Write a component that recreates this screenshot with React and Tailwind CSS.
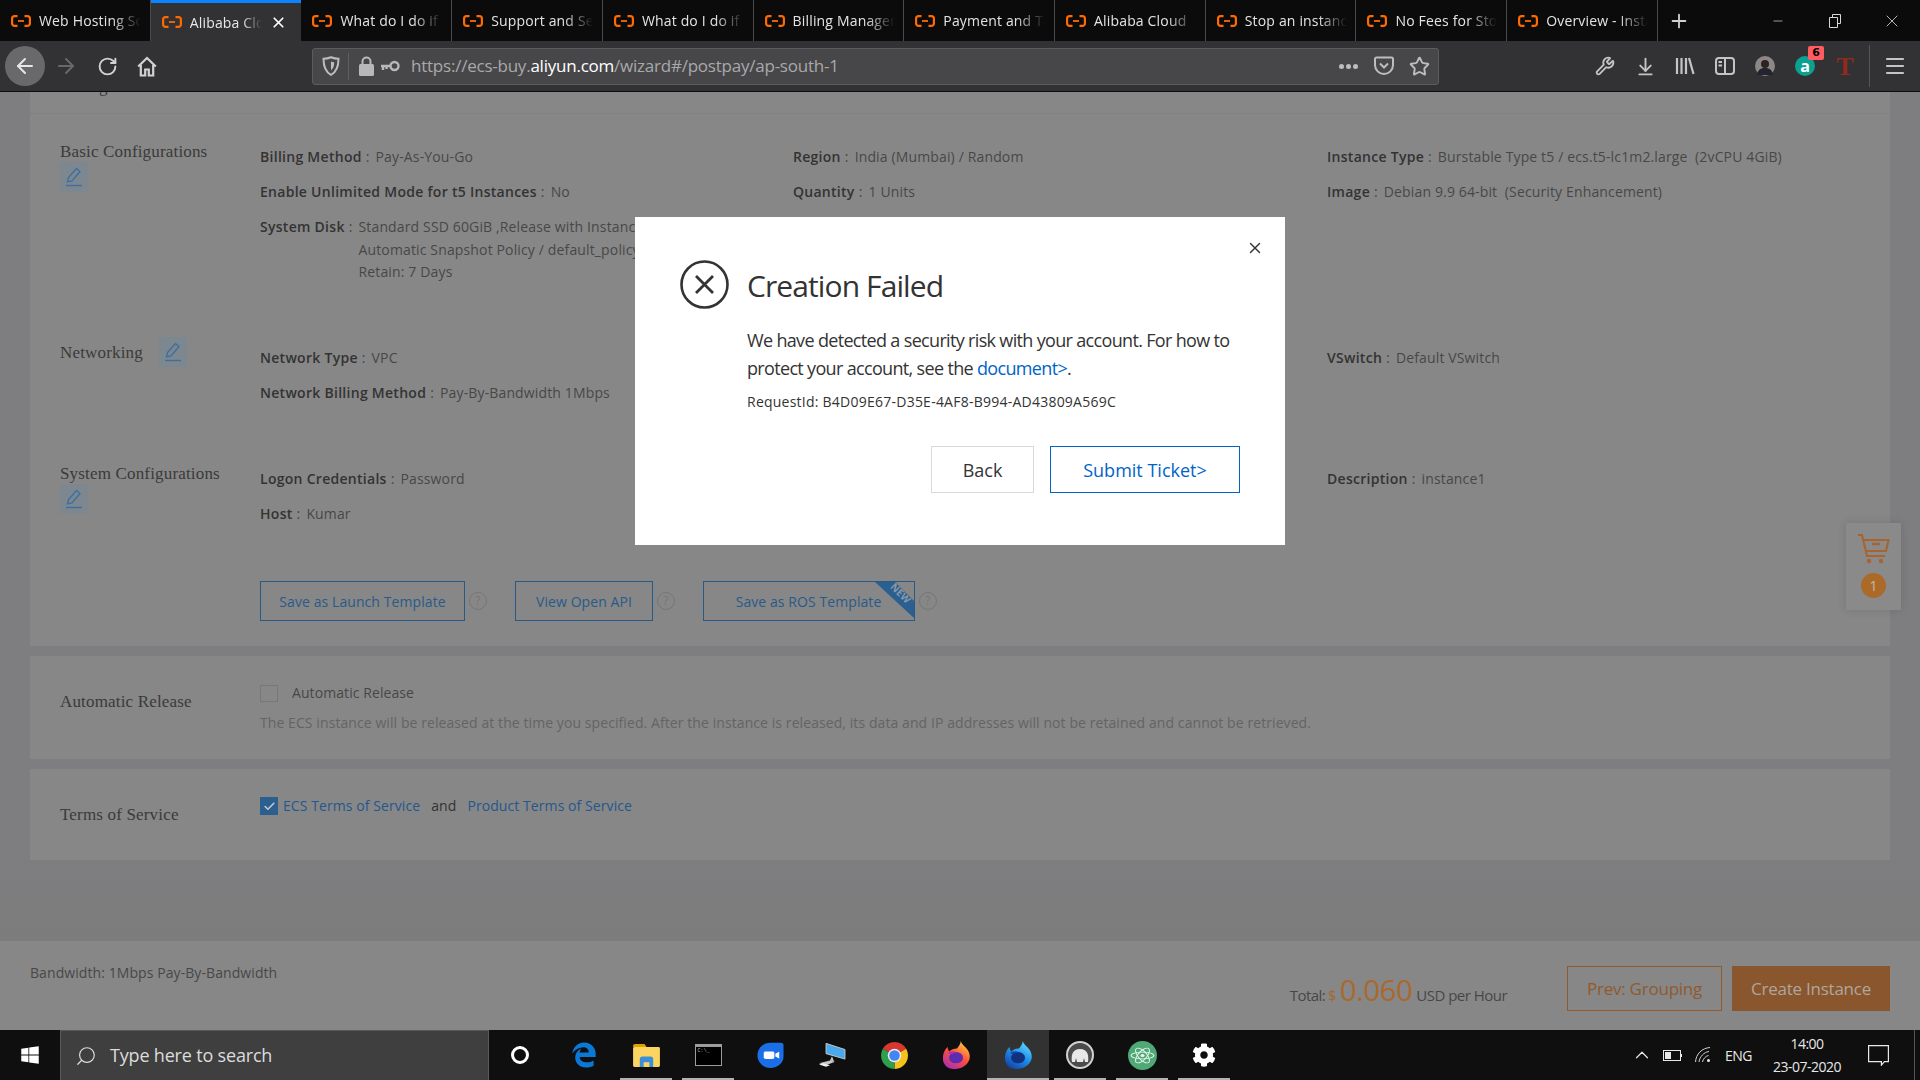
import React from "react";
import { ArrowLeft, ArrowRight, RotateCw, Star, Wrench, ArrowDownToLine, Menu, X, Search, ChevronUp, Check, Minus, Plus } from "lucide-react";
import { FaWindows, FaEdgeLegacy, FaCog } from "react-icons/fa";

const tabs = ["Web Hosting Solutions", "Alibaba Cloud", "What do I do if", "Support and Service", "What do I do if", "Billing Management", "Payment and Tax", "Alibaba Cloud", "Stop an instance", "No Fees for Stopped", "Overview - Instance"];

const AliLogo = () => (
  <svg width="20" height="12" viewBox="0 0 20 12" fill="none" stroke="#ff6a00" strokeWidth="2.2" className="shrink-0">
    <path d="M6.5 1.1H3.6A2.5 2.5 0 0 0 1.1 3.6v4.8a2.5 2.5 0 0 0 2.5 2.5h2.9" />
    <path d="M13.5 1.1h2.9a2.5 2.5 0 0 1 2.5 2.5v4.8a2.5 2.5 0 0 1-2.5 2.5h-2.9" />
    <path d="M7 6h6" strokeWidth="1.8" />
  </svg>
);

const Tab = ({ title, active }) => (
  <div className={`flex w-[150.73px] shrink-0 items-center pl-[11px] gap-[8px] text-[14px] tracking-[0.012em] ${active ? "bg-[#323234] border-t-[3px] border-[#0a84ff] text-[#e8e8e8]" : "border-r border-[#4a4a4c] text-[#e4e4e4]"}`}>
    <AliLogo />
    <span className={`overflow-hidden whitespace-nowrap [mask-image:linear-gradient(to_right,black_72%,transparent)] ${active ? "w-[72px]" : "w-[102px]"}`}>{title}</span>
    {active && <X size={17} strokeWidth={2.4} className="text-white" />}
  </div>
);

const Btn = ({ children, className = "" }) => (
  <div className={`flex h-[40px] w-[40px] shrink-0 items-center justify-center ${className}`}>{children}</div>
);

const TabBar = () => (
  <div className="flex h-[41px] shrink-0 bg-[#0b0b0c]">
    {tabs.map((t, i) => <Tab key={i} title={t} active={i === 1} />)}
    <div className="flex w-[42px] items-center justify-center text-[#d0d0d0]"><Plus size={22} strokeWidth={2} /></div>
    <div className="ml-[50px] flex w-[56px] items-center justify-center text-[#d8d8d8]"><Minus size={14} strokeWidth={1.2} /></div>
    <div className="flex w-[58px] items-center justify-center">
      <svg width="12" height="14" viewBox="0 0 12 14" fill="none" stroke="#d8d8d8"><path d="M.5 3.5h8v10h-8z" /><path d="M3.5 3.5v-3h8v9h-3" /></svg>
    </div>
    <div className="flex w-[56px] items-center justify-center text-[#d8d8d8]"><X size={20} strokeWidth={1} /></div>
  </div>
);

const Shield = () => (
  <svg width="18" height="20" viewBox="0 0 18 20" fill="none" stroke="#bdbdbf" strokeWidth="2">
    <path d="M9 1.2c2.5 1 5 1.5 7.5 1.5 0 7.5-1.5 13-7.5 16.1C3 15.700 1.500 10.200 1.500 2.700 4 2.700 6.500 2.200 9 1.200z" />
    <path d="M9 5.500c1 .4 2 .6 3.200.7 0 3.700-.8 6.300-3.200 8z" fill="#bdbdbf" stroke="none" />
  </svg>
);
const LockIcon = () => (
  <svg width="15" height="20" viewBox="0 0 15 20"><path d="M3.500 8V5.500a4 4 0 0 1 8 0V8" fill="none" stroke="#b8b8ba" strokeWidth="2" /><rect y="8" width="15" height="12" rx="1.500" fill="#b8b8ba" /></svg>
);
const KeyIcon = () => (
  <svg width="20" height="12" viewBox="0 0 20 12" fill="none" stroke="#b8b8ba" strokeWidth="2.400"><circle cx="14.500" cy="6" r="4" /><path d="M10 6H1M3 6v4M6.500 6v3" /></svg>
);
const Pocket = () => (
  <svg width="20" height="20" viewBox="0 0 20 20" fill="none" stroke="#bdbdbf" strokeWidth="2"><path d="M2.500 1.500h15a1.500 1.500 0 0 1 1.500 1.500v6a9 9 0 0 1-18 0V3a1.500 1.500 0 0 1 1.500-1.500z" /><path d="M6 7.500l4 4 4-4" /></svg>
);
const LibraryIcon = () => (
  <svg width="20" height="20" viewBox="0 0 20 20" fill="none" stroke="#c4c4c6" strokeWidth="2.200"><path d="M2 2v16M6.500 2v16M11 2v16M14 2l4.500 16" /></svg>
);
const SidebarIcon = () => (
  <svg width="20" height="20" viewBox="0 0 20 20" fill="none" stroke="#c4c4c6" strokeWidth="2"><rect x="1" y="2" width="18" height="16" rx="3" /><path d="M10 2v16M3.500 6H7M3.500 9.500H7" /></svg>
);
const HomeIcon = () => (
  <svg width="20" height="21" viewBox="0 0 20 21" fill="none" stroke="#d2d2d4" strokeWidth="2.200"><path d="M1.200 10.500 10 2l8.800 8.500" /><path d="M3.800 9v10.500h4.400v-6h3.600v6h4.400V9" /></svg>
);

const Toolbar = () => (
  <div className="flex h-[51px] shrink-0 items-center border-b border-[#0c0c0d] bg-[#323234] pl-[5px]">
    <Btn className="rounded-full bg-[#69696b]"><ArrowLeft size={24} strokeWidth={2} className="text-[#e6e6e6]" /></Btn>
    <Btn className="ml-[1px]"><ArrowRight size={24} strokeWidth={2} className="text-[#68686a]" /></Btn>
    <Btn className="ml-[1px]"><RotateCw size={21} strokeWidth={2.200} className="text-[#d2d2d4]" /></Btn>
    <Btn><HomeIcon /></Btn>
    <div className="ml-[145px] flex h-[37px] w-[1127px] shrink-0 items-center rounded-[3px] border border-[#5c5c5e] bg-[#474749]">
      <div className="flex h-[27px] w-[36px] items-center justify-center border-r border-[#5f5f61]"><Shield /></div>
      <div className="ml-[10px] flex items-center gap-[6px]"><LockIcon /><KeyIcon /></div>
      <div className="ml-[11px] text-[17px] tracking-[-0.0135em] text-[#a9a9ab]">https://ecs-buy.<span className="text-white">aliyun.com</span>/wizard#/postpay/ap-south-1</div>
      <div className="ml-auto flex items-center">
        <div className="flex w-[36px] justify-center gap-[2px]">
          <span className="h-[5px] w-[5px] rounded-full bg-[#bdbdbf]" /><span className="h-[5px] w-[5px] rounded-full bg-[#bdbdbf]" /><span className="h-[5px] w-[5px] rounded-full bg-[#bdbdbf]" />
        </div>
        <div className="flex w-[36px] justify-center"><Pocket /></div>
        <div className="flex w-[36px] justify-center pr-[2px] text-[#bdbdbf]"><Star size={21} strokeWidth={2.200} /></div>
      </div>
    </div>
    <div className="ml-[146px] flex items-center text-[#c4c4c6]">
      <Btn><Wrench size={20} strokeWidth={2.200} /></Btn>
      <Btn><ArrowDownToLine size={21} strokeWidth={2.200} /></Btn>
      <Btn><LibraryIcon /></Btn>
      <Btn><SidebarIcon /></Btn>
      <Btn>
        <svg width="20" height="20" viewBox="0 0 20 20"><circle cx="10" cy="10" r="10" fill="#8d8886" /><circle cx="10" cy="8" r="4" fill="#2c2320" /><path d="M2 19c1-6 4-7 8-7s7 1 8 7z" fill="#22242e" /></svg>
      </Btn>
      <Btn className="relative">
        <span className="flex h-[20px] w-[20px] items-center justify-center rounded-full bg-[#0aa190] text-[16px] font-bold leading-none text-white">a</span>
        <span className="absolute right-[1px] top-[0px] flex h-[14px] w-[16px] items-center justify-center rounded-[2px] bg-[#ff5c62] font-['DejaVu_Sans',sans-serif] text-[11px] font-bold text-black">6</span>
      </Btn>
      <Btn><span className="font-['Liberation_Serif',serif] text-[26px] font-bold text-[#8e2b1c]">T</span></Btn>
    </div>
    <div className="ml-[4px] h-[42px] w-px bg-[#555557]" />
    <Btn className="ml-[5px]"><Menu size={24} strokeWidth={2.200} className="text-[#c4c4c6]" /></Btn>
  </div>
);

const EditBtn = ({ className = "" }) => (
  <div className={`flex h-[30px] w-[28px] items-center justify-center rounded-[2px] bg-[#7c8790] ${className}`}>
    <svg width="18" height="20" viewBox="0 0 18 20" fill="none" stroke="#3c6f9f" strokeWidth="1.300"><path d="M11.500 1.500l3.500 3-8 9.500-4.500 1 1-4.500z" /><path d="M1 18.500h16" /></svg>
  </div>
);

const Heading = ({ children }) => (
  <div className="whitespace-nowrap font-['Liberation_Serif',serif] text-[17px] leading-[22px] tracking-[0.01em] text-[#3a3a3a]">{children}</div>
);

const Field = ({ label, children }) => (
  <div className="flex text-[14px] leading-[22.500px] tracking-[0.01em] text-[#474747]">
    <span className="whitespace-nowrap font-semibold tracking-[0.02em] text-[#333333]">{label}</span>
    <span className="ml-[4px] mr-[6px]">:</span>
    <div className="whitespace-nowrap">{children}</div>
  </div>
);

const Col = ({ children }) => <div className="flex flex-col gap-[12.500px]">{children}</div>;
const Grid3 = ({ children }) => <div className="grid grid-cols-[533px_534px_1fr]">{children}</div>;

const OutlineBtn = ({ children, className = "" }) => (
  <div className={`relative flex h-[40px] items-center justify-center border border-[#285a86] pt-[1px] text-[14px] text-[#2a5a88] ${className}`}>{children}</div>
);
const Help = () => (
  <span className="ml-[4px] flex h-[18px] w-[18px] items-center justify-center rounded-full border border-[#767676] text-[12px] text-[#767676]">?</span>
);

const ConfigPanel = () => (
  <div className="flex h-[554px] flex-col bg-[#878787]">
    <div className="h-[22px] overflow-hidden border-b border-dotted border-[#7c7c7c] pl-[30px]">
      <div className="-mt-[16px] font-['Liberation_Serif',serif] text-[17px] leading-[22px] text-[#3a3a3a]">Configurations</div>
    </div>
    <div className="flex h-[216px]">
      <div className="w-[230px] pl-[30px] pt-[27px]"><Heading>Basic Configurations</Heading><EditBtn className="-mt-[1px]" /></div>
      <div className="flex-1 pt-[32px]">
        <Grid3>
          <Col>
            <Field label="Billing Method">Pay-As-You-Go</Field>
            <Field label="Enable Unlimited Mode for t5 Instances">No</Field>
            <Field label="System Disk">Standard SSD 60GiB ,Release with Instance<br />Automatic Snapshot Policy / default_policy<br />Retain: 7 Days</Field>
          </Col>
          <Col>
            <Field label="Region">India (Mumbai) / Random</Field>
            <Field label="Quantity">1 Units</Field>
          </Col>
          <Col>
            <Field label="Instance Type">Burstable Type t5 / ecs.t5-lc1m2.large&nbsp;&nbsp;(2vCPU 4GiB)</Field>
            <Field label="Image">Debian 9.9 64-bit&nbsp;&nbsp;(Security Enhancement)</Field>
          </Col>
        </Grid3>
      </div>
    </div>
    <div className="flex h-[132px]">
      <div className="flex w-[230px] items-start gap-[16px] pl-[30px] pt-[12px]"><Heading>Networking</Heading><EditBtn className="-mt-[5px]" /></div>
      <div className="flex-1 pt-[17px]">
        <Grid3>
          <Col>
            <Field label="Network Type">VPC</Field>
            <Field label="Network Billing Method">Pay-By-Bandwidth 1Mbps</Field>
          </Col>
          <div />
          <Col><Field label="VSwitch">Default VSwitch</Field></Col>
        </Grid3>
      </div>
    </div>
    <div className="flex flex-1">
      <div className="w-[230px] pl-[30px] pt-[1px]"><Heading>System Configurations</Heading><EditBtn className="-mt-[1px]" /></div>
      <div className="flex-1 pt-[6px]">
        <Grid3>
          <Col>
            <Field label="Logon Credentials">Password</Field>
            <Field label="Host">Kumar</Field>
          </Col>
          <div />
          <Col><Field label="Description">instance1</Field></Col>
        </Grid3>
        <div className="mt-[55px] flex items-center">
          <OutlineBtn className="w-[205px]">Save as Launch Template</OutlineBtn><Help />
          <OutlineBtn className="ml-[28px] w-[138px]">View Open API</OutlineBtn><Help />
          <OutlineBtn className="ml-[28px] w-[212px] overflow-hidden">
            <span className="pl-[3px] pr-[4px]">Save as ROS Template</span>
            <svg className="absolute right-0 top-0" width="40" height="36" viewBox="0 0 40 36"><path d="M1 0h20l19 19v17z" fill="#2a5f8f" /></svg>
            <span className="absolute right-[1px] top-[6px] rotate-45 text-[10px] font-bold leading-none text-[#8a9aa8]">NEW</span>
          </OutlineBtn>
          <Help />
        </div>
      </div>
    </div>
  </div>
);

const ReleasePanel = () => (
  <div className="mt-[10px] flex h-[103px] bg-[#878787]">
    <div className="w-[230px] pl-[30px] pt-[35px]"><Heading>Automatic Release</Heading></div>
    <div className="flex-1 pt-[26px] text-[14px] leading-[22px]">
      <div className="flex items-center text-[#474747]">
        <span className="h-[17px] w-[18px] border border-[#777777]" />
        <span className="ml-[14px]">Automatic Release</span>
      </div>
      <div className="mt-[8px] whitespace-nowrap text-[#646464]">The ECS instance will be released at the time you specified. After the instance is released, its data and IP addresses will not be retained and cannot be retrieved.</div>
    </div>
  </div>
);

const TermsPanel = () => (
  <div className="mt-[10px] flex h-[91px] bg-[#878787]">
    <div className="w-[230px] pl-[30px] pt-[35px]"><Heading>Terms of Service</Heading></div>
    <div className="flex flex-1 items-start pt-[26px] text-[14px] leading-[22px]">
      <span className="mr-[5px] mt-[2px] flex h-[18px] w-[18px] items-center justify-center bg-[#2a5f8f] text-[#c8c8c8]"><Check size={13} strokeWidth={3} /></span>
      <span className="text-[#24588c]">ECS Terms of Service</span>
      <span className="mx-[11px] text-[#333333]">and</span>
      <span className="text-[#24588c]">Product Terms of Service</span>
    </div>
  </div>
);

const Footer = () => (
  <div className="mt-auto flex h-[89px] shrink-0 items-start justify-between bg-[#878787] px-[30px]">
    <div className="pt-[21px] text-[14px] leading-[22px] text-[#474747]">Bandwidth: 1Mbps Pay-By-Bandwidth</div>
    <div className="flex items-start pt-[25px]">
      <div className="mt-[2px] flex h-[50px] items-baseline text-[15px] tracking-[-0.035em] text-[#474747]">
        <span>Total:</span>
        <span className="ml-[3px] text-[14px] text-[#a3692f]">$</span>
        <span className="ml-[4px] text-[29.500px] leading-[44px] text-[#a8692f]">0.060</span>
        <span className="ml-[4px]">USD per Hour</span>
      </div>
      <div className="ml-[60px] flex h-[45px] w-[155px] items-center justify-center border border-[#8f5a30] text-[17px] tracking-[-0.014em] text-[#8f5a30]">Prev: Grouping</div>
      <div className="ml-[10px] flex h-[45px] w-[158px] items-center justify-center bg-[#8a562e] text-[17px] tracking-[-0.014em] text-[#aea69d]">Create Instance</div>
    </div>
  </div>
);

const Fox = ({ a, b, c, inner }) => (
  <svg width="27" height="28" viewBox="0 0 29 37" preserveAspectRatio="none">
    <defs>
      <linearGradient id={`g${a.slice(1)}`} x1="0.800" y1="0" x2="0.200" y2="1">
        <stop offset="0" stopColor={b} /><stop offset="0.500" stopColor={a} /><stop offset="1" stopColor={c} />
      </linearGradient>
    </defs>
    <path d="M19 0c1 5 6 8 8 13 3 7 2 13-2 18-5 6-14 8-20 4C0 31-1 24 .500 17 1.500 13 3 10 5 8c0 3 1 5 2 6 2-3 5-4 8-4 2-3 4-6 4-10z" fill={`url(#g${a.slice(1)})`} />
    <circle cx="14" cy="22" r="7.500" fill={inner} />
    <path d="M5 16c3-3 9-3 12 0-4-1-6 0-7 2z" fill={c} />
  </svg>
);

const Chrome = () => (
  <svg width="27" height="27" viewBox="2 2 28 28">
    <path d="M16 16 3.880 9A14 14 0 0 1 28.120 9z" fill="#d8382f" />
    <path d="M16 16 28.120 9A14 14 0 0 1 16 30z" fill="#f6c21a" />
    <path d="M16 16 16 30A14 14 0 0 1 3.880 9z" fill="#2f9e4f" />
    <circle cx="16" cy="16" r="7" fill="#eeeeee" /><circle cx="16" cy="16" r="5.500" fill="#4285f4" />
  </svg>
);

const Folder = () => (
  <svg width="27" height="23" viewBox="0 0 28 24">
    <path d="M0 2a2 2 0 0 1 2-2h10l2 3H0z" fill="#e0a100" /><rect y="3" width="28" height="21" rx="1.500" fill="#fcd462" />
    <path d="M7 24v-8a3 3 0 0 1 3-3h8a3 3 0 0 1 3 3v8h-4v-5h-6v5z" fill="#3a8fd8" />
  </svg>
);
const Terminal = () => (
  <div className="h-[22px] w-[27px] border border-[#9c9c9c] border-t-[3px] bg-black pl-[2px] pt-[2px] font-['Liberation_Mono',monospace] text-[5px] leading-none text-[#bbbbbb]">C:\_</div>
);
const ZoomIcon = () => (
  <svg width="27" height="27" viewBox="0 0 28 40" preserveAspectRatio="none">
    <path d="M14 1h10a3.500 3.500 0 0 1 3.500 3.500V22c0 9-6 16.500-13.500 16.500S.500 30 .500 20 6 1 14 1z" fill="#1b6fe6" />
    <rect x="7" y="14" width="11" height="11" rx="2" fill="#fff" /><path d="M19 17.500l4-3v10l-4-3z" fill="#fff" />
  </svg>
);
const Pc = () => (
  <svg width="28" height="26" viewBox="0 0 28 38" preserveAspectRatio="none">
    <path d="M8 2 27 11v14L8 17z" fill="#4aa8ec" stroke="#d0d0d0" />
    <path d="M14 21l2 7-4-1zM1 31l11-4 5 2-9 5z" fill="#c8c8c8" /><path d="M1 33l7 3 4-2-7-3z" fill="#eeeeee" />
  </svg>
);
const Mamp = () => (
  <svg width="28" height="28" viewBox="0 0 28 28">
    <circle cx="14" cy="14" r="13" fill="#4b4b4b" stroke="#d2d2d2" strokeWidth="2" />
    <path d="M6 21c-1-6 0-13 8-13s9 7 8 13h-3l-1-4-1 4h-6l-1-4-1 4z" fill="#e8e8e8" />
  </svg>
);
const Atom = () => (
  <svg width="29" height="29" viewBox="0 0 28 38" preserveAspectRatio="none">
    <ellipse cx="14" cy="19" rx="14" ry="19" fill="#4fa876" />
    <g fill="none" stroke="#e8f5ec" strokeWidth="1">
      <ellipse cx="14" cy="19" rx="11" ry="4.500" /><ellipse cx="14" cy="19" rx="11" ry="4.500" transform="rotate(60 14 19)" /><ellipse cx="14" cy="19" rx="11" ry="4.500" transform="rotate(120 14 19)" />
    </g>
    <circle cx="14" cy="19" r="2" fill="#e8f5ec" />
  </svg>
);

const TaskIcon = ({ children, on, active }) => (
  <div className={`relative flex h-[50px] w-[62px] shrink-0 items-center justify-center ${active ? "bg-[#323232]" : ""}`}>
    {children}
    {on && <span className={`absolute bottom-0 h-[2px] bg-[#b2b2b2] ${active ? "inset-x-0" : "inset-x-[5px]"}`} />}
  </div>
);

const Taskbar = () => (
  <div className="flex h-[50px] shrink-0 bg-[#0f0f0f] text-white">
    <div className="flex w-[60px] items-center justify-center"><FaWindows size={20} /></div>
    <div className="flex h-[50px] w-[429px] items-center border-x border-t border-[#5a5a5a] bg-[#3f3f3f] pl-[14px] text-[18px] tracking-[-0.01em] text-[#dcdcdc]">
      <Search size={22} strokeWidth={1.300} className="-scale-x-100" />
      <span className="ml-[13px]">Type here to search</span>
    </div>
    <TaskIcon><span className="h-[18px] w-[18px] rounded-full border-[3px] border-white" /></TaskIcon>
    <div className="w-[2px] shrink-0" />
    <TaskIcon><FaEdgeLegacy size={26} className="text-[#0a78d7]" /></TaskIcon>
    <TaskIcon on><Folder /></TaskIcon>
    <TaskIcon on><Terminal /></TaskIcon>
    <TaskIcon><ZoomIcon /></TaskIcon>
    <TaskIcon><Pc /></TaskIcon>
    <TaskIcon><Chrome /></TaskIcon>
    <TaskIcon><Fox a="#ff4f3a" b="#ffd23f" c="#a72bb8" inner="#5b2bb0" /></TaskIcon>
    <TaskIcon on active><Fox a="#1f8fe8" b="#63e0ff" c="#123fa8" inner="#12307c" /></TaskIcon>
    <TaskIcon on><Mamp /></TaskIcon>
    <TaskIcon on><Atom /></TaskIcon>
    <TaskIcon on><FaCog size={24} /></TaskIcon>
    <div className="ml-auto flex items-center pr-[5px] text-[14px] tracking-[-0.035em] text-[#e8e8e8]">
      <ChevronUp size={22} strokeWidth={1.300} className="-mr-[2px]" />
      <svg className="ml-[12px]" width="19" height="11" viewBox="0 0 19 11" fill="none" stroke="#e8e8e8"><rect x=".5" y=".5" width="17" height="10" /><rect x="2" y="2" width="6" height="7" fill="#e8e8e8" stroke="none" /><path d="M18.500 4v3" /></svg>
      <svg className="ml-[13px]" width="16" height="16" viewBox="0 0 16 16" fill="none" stroke="#cfcfcf"><path d="M.5 15C1 7 7 1 15 .5M4 15c.5-5 5-10 10-10.500M7.500 15c.5-3 3-6 6-6.500" /><circle cx="13.500" cy="13.500" r="1.500" fill="#e8e8e8" stroke="none" /></svg>
      <span className="ml-[14px] w-[38px]">ENG</span>
      <div className="ml-[2px] w-[84px] text-center leading-[23px]"><div>14:00</div><div>23-07-2020</div></div>
      <svg className="ml-[19px]" width="21" height="21" viewBox="0 0 21 21" fill="none" stroke="#e8e8e8" strokeWidth="1.200"><path d="M.6.6h19.800v16h-4l-3 3.500v-3.500H.6z" /></svg>
      <div className="ml-[25px] h-[50px] w-px bg-[#555555]" />
    </div>
  </div>
);

const CartFloat = () => (
  <div className="absolute left-[1846px] top-[523px] flex h-[87px] w-[55px] flex-col items-center rounded-[1px] bg-[#8a8a8a] pt-[11px] shadow-[0_0_10px_rgba(0,0,0,0.12)]">
    <svg width="32" height="30" viewBox="0 0 32 30" fill="none" stroke="#a8642e" strokeWidth="2">
      <path d="M0 1h4l5 21h18" /><path d="M5.500 6h25l-2.500 11H8" /><path d="M14 10h8" strokeWidth="2.500" />
      <circle cx="11" cy="27" r="2.200" fill="#a8642e" stroke="none" /><circle cx="23" cy="27" r="2.200" fill="#a8642e" stroke="none" />
    </svg>
    <span className="mt-[9px] flex h-[25px] w-[25px] items-center justify-center rounded-full bg-[#ab6a28] text-[14px] text-[#c8b8a8]">1</span>
  </div>
);

const Dialog = () => (
  <div className="absolute left-[635px] top-[217px] h-[328px] w-[650px] bg-white text-[#333333]">
    <X size={18} strokeWidth={1.800} className="absolute right-[21px] top-[22px] text-[#333333]" />
    <div className="flex items-center pl-[45px] pt-[43px]">
      <svg width="49" height="49" viewBox="0 0 49 49" fill="none" stroke="#333333" strokeWidth="2.600" className="shrink-0">
        <circle cx="24.500" cy="24.500" r="23" /><path d="M16 16l17 17M33 16 16 33" strokeWidth="2.800" />
      </svg>
      <div className="ml-[18px] mt-[3px] text-[30px] leading-[40px] tracking-[-0.03em]">Creation Failed</div>
    </div>
    <div className="mt-[17px] pl-[112px] text-[18px] leading-[28px] tracking-[-0.037em]">
      We have detected a security risk with your account. For how to<br />
      protect your account, see the <span className="text-[#0064c8]">document&gt;</span>.
    </div>
    <div className="mt-[10px] pl-[112px] text-[14px] leading-[20px] tracking-[0.017em]">RequestId: B4D09E67-D35E-4AF8-B994-AD43809A569C</div>
    <div className="mt-[34px] flex justify-end gap-[16px] pr-[45px] tracking-[0em]">
      <div className="flex h-[47px] w-[103px] items-center justify-center border border-[#d9d9d9] pt-[2px] text-[18px]">Back</div>
      <div className="flex h-[47px] w-[190px] items-center justify-center border border-[#0064c8] pt-[2px] text-[18px] text-[#0064c8]">Submit Ticket&gt;</div>
    </div>
  </div>
);

export default function App() {
  return (
    <div className="relative flex h-[1080px] w-[1920px] flex-col overflow-hidden bg-[#7e7e80] font-['Open_Sans',sans-serif] tracking-[0.005em]">
      <TabBar />
      <Toolbar />
      <div className="flex flex-1 flex-col bg-gradient-to-b from-[#7e7e80] from-80% to-[#7b7b7b]">
        <div className="px-[30px]">
          <ConfigPanel />
          <ReleasePanel />
          <TermsPanel />
        </div>
        <Footer />
      </div>
      <Taskbar />
      <CartFloat />
      <Dialog />
    </div>
  );
}
